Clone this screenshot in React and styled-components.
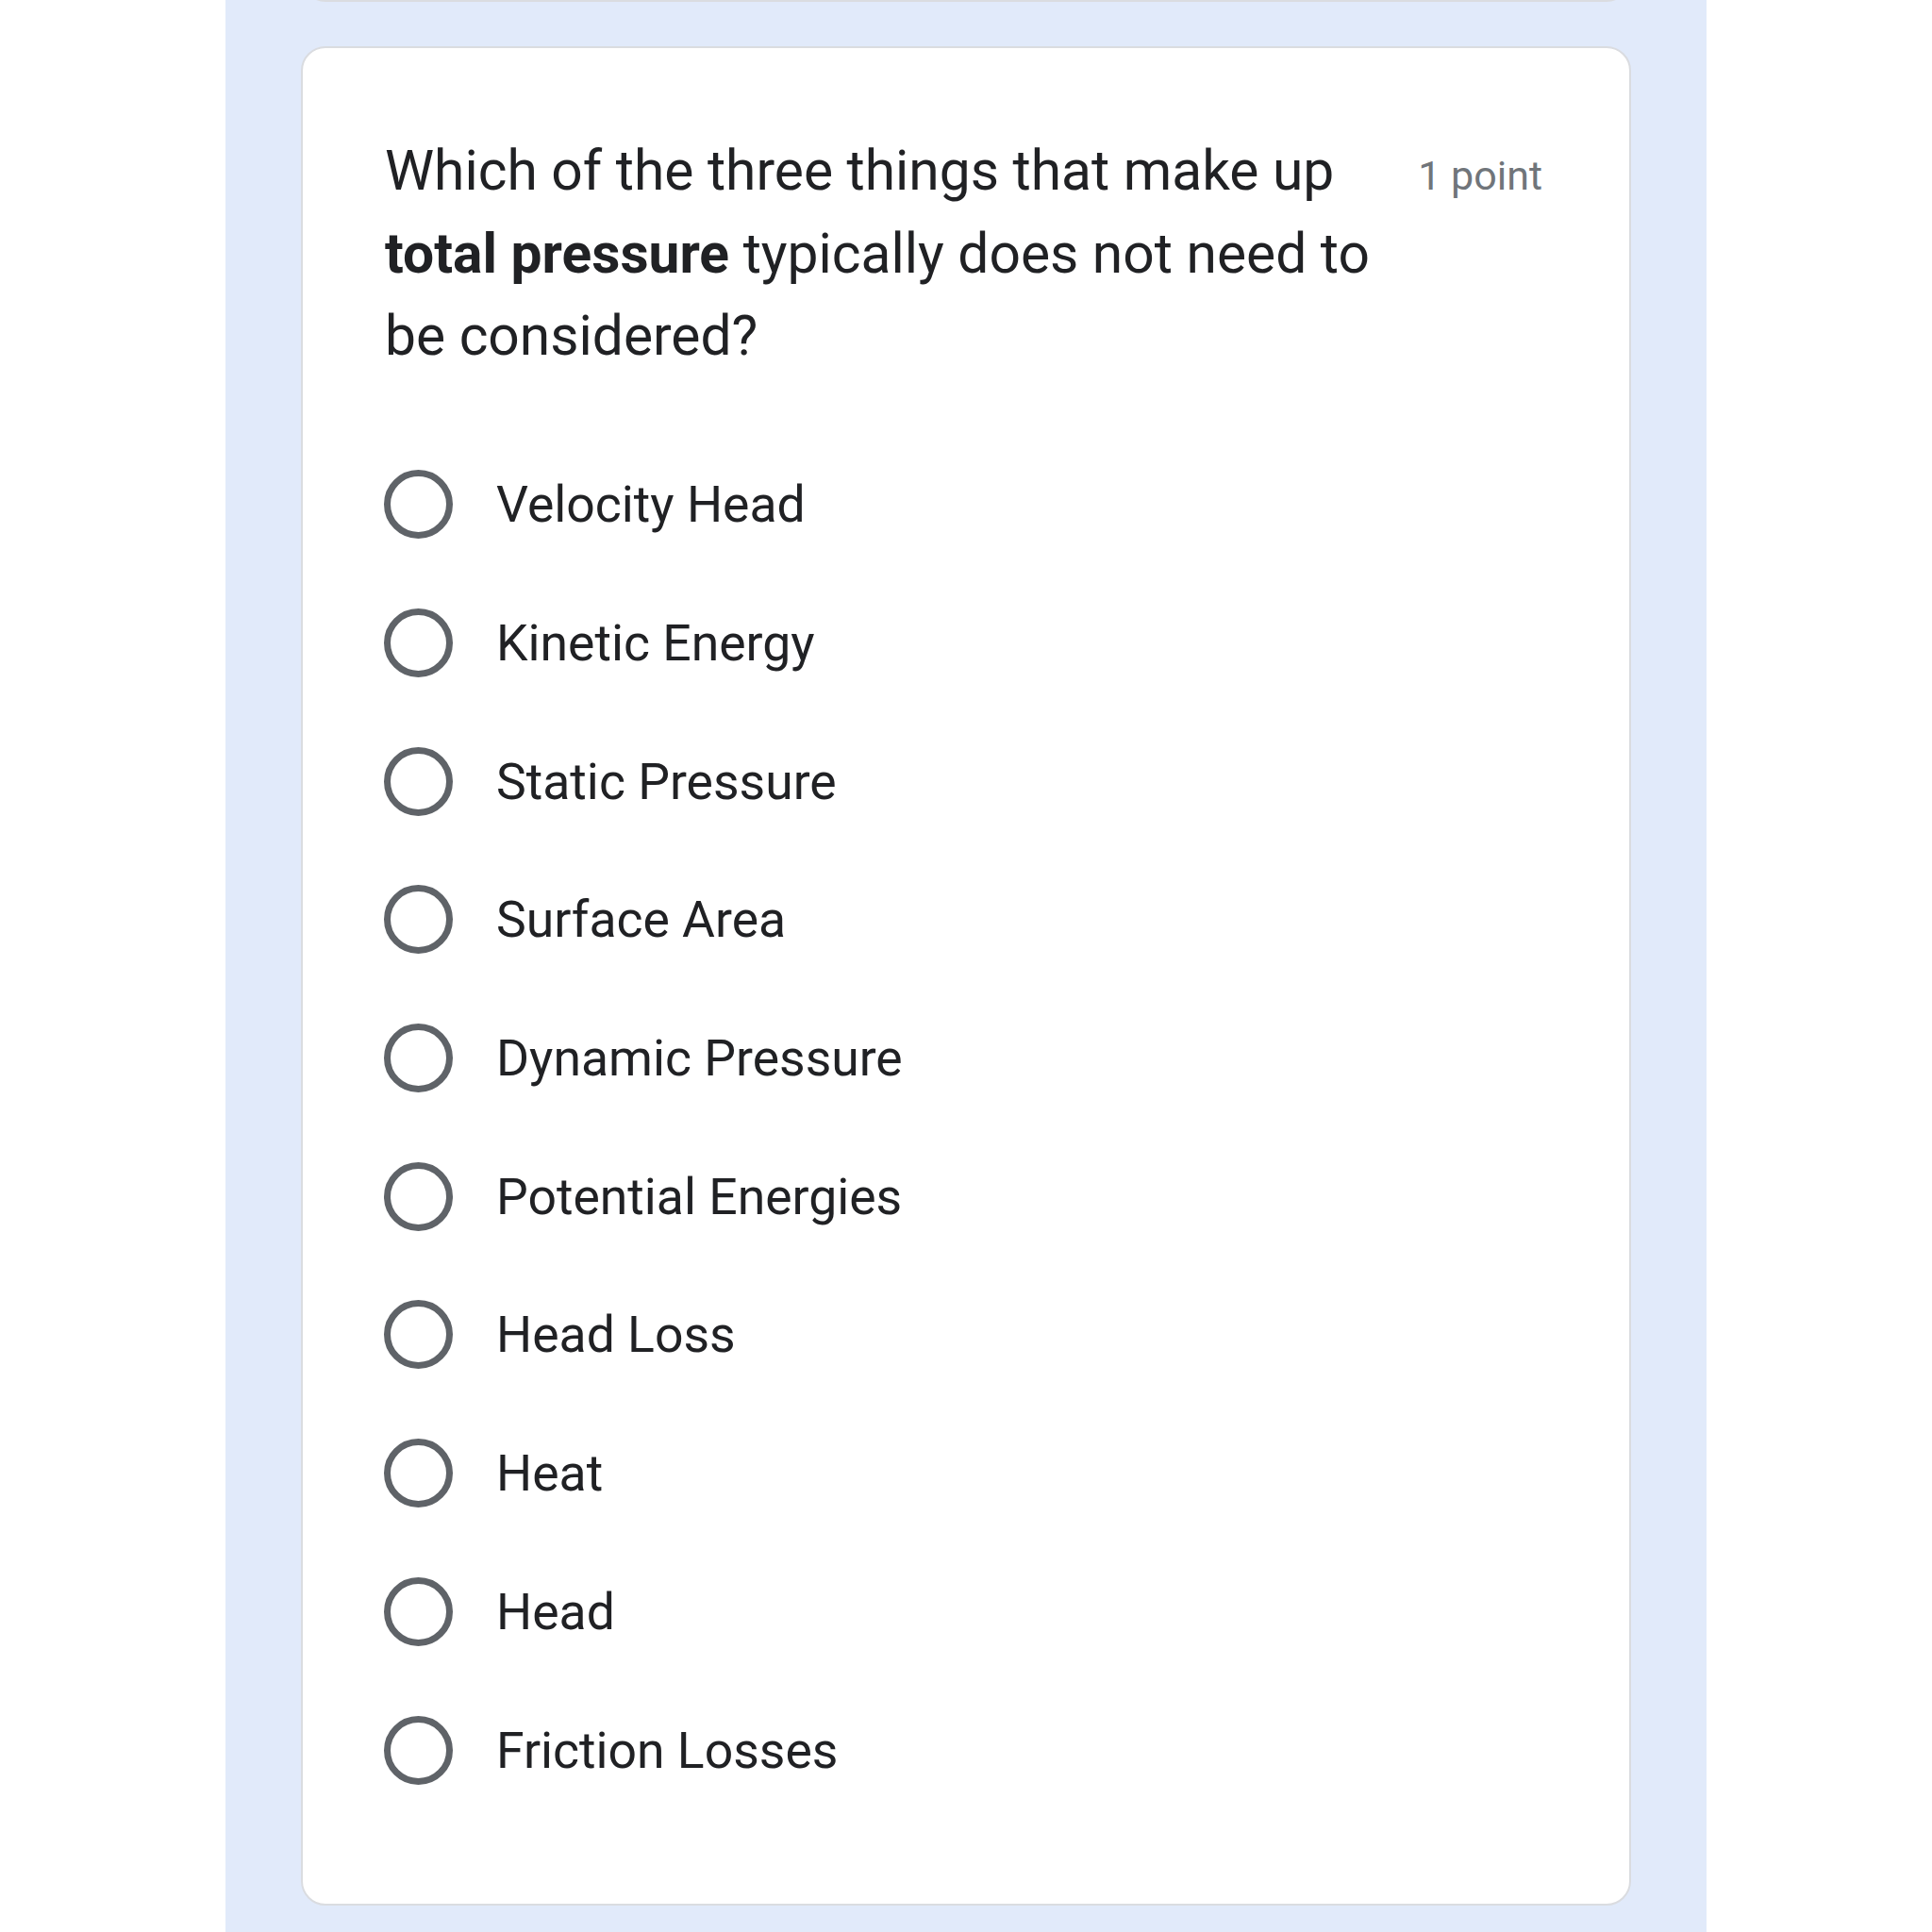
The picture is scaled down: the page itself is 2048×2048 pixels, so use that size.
import React from "react";
import styled, { createGlobalStyle } from "styled-components";

const options = [
  "Velocity Head",
  "Kinetic Energy",
  "Static Pressure",
  "Surface Area",
  "Dynamic Pressure",
  "Potential Energies",
  "Head Loss",
  "Heat",
  "Head",
  "Friction Losses",
];

const App = () => {
  return (
    <>
      <GlobalStyle />
      <Page>
        <Band>
          <PrevCard />
          <Card>
            <Header>
              <Question>
                Which of the three things that make up <b>total pressure</b>{" "}
                typically does not need to be considered?
              </Question>
              <Points>1 point</Points>
            </Header>
            <OptionList>
              {options.map((label) => (
                <Option key={label}>
                  <Radio />
                  <OptionLabel>{label}</OptionLabel>
                </Option>
              ))}
            </OptionList>
          </Card>
        </Band>
      </Page>
    </>
  );
};

//----------------------- Wrapper CSS ---------------------------------

const GlobalStyle = createGlobalStyle`
  body {
    margin: 0;
    background: #ffffff;
    font-family: Roboto, "Liberation Sans", sans-serif;
  }
`;

const Page = styled.div`
  width: 2048px;
  height: 2048px;
  overflow: hidden;
  display: flex;
  justify-content: center;
  background: #ffffff;
`;

const Band = styled.div`
  width: 1570px;
  box-sizing: border-box;
  padding: 0 80px;
  background: #e1eafa;
  display: flex;
  flex-direction: column;
  gap: 47px;
`;

const PrevCard = styled.div`
  height: 28px;
  margin-top: -28px;
  background: #ffffff;
  border: 2px solid #dadce0;
  border-top: none;
  border-radius: 0 0 26px 26px;
`;

const Card = styled.div`
  background: #ffffff;
  border: 2px solid #dadce0;
  border-radius: 26px;
  padding: 87px 92px 90px 86px;
  display: flex;
  flex-direction: column;
  gap: 61px;
`;

//---------------------------  Text CSS  -------------------------------

const Header = styled.div`
  display: flex;
  align-items: baseline;
  gap: 32px;
`;

const Question = styled.div`
  flex: 1;
  padding-left: 1px;
  font-size: 58.7px;
  line-height: 87.5px;
  color: #202124;

  b {
    font-weight: 700;
  }
`;

const Points = styled.div`
  font-size: 43px;
  color: #70757a;
  white-space: nowrap;
`;

const OptionList = styled.div`
  display: flex;
  flex-direction: column;
`;

const Option = styled.div`
  height: 146.7px;
  display: flex;
  align-items: center;
`;

const Radio = styled.span`
  width: 73px;
  height: 73px;
  box-sizing: border-box;
  border: 7px solid #5f6368;
  border-radius: 50%;
  flex-shrink: 0;
`;

const OptionLabel = styled.span`
  margin-left: 46px;
  font-size: 53.5px;
  color: #202124;
`;

export default App;
